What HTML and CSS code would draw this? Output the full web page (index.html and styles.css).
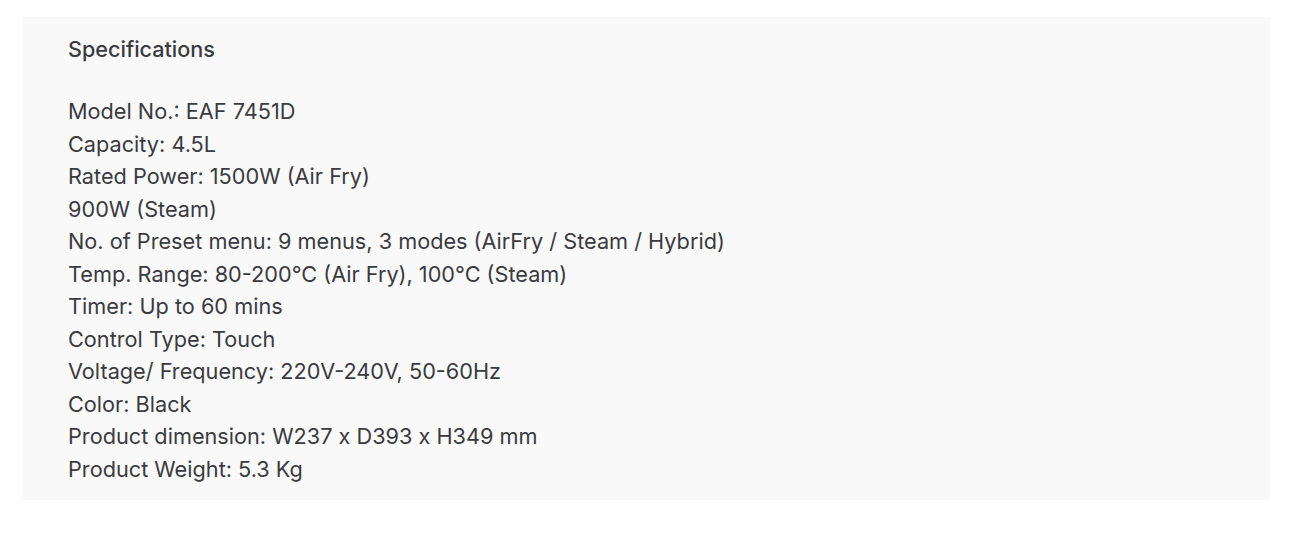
FILE: index.html
```html
<!DOCTYPE html>
<html>
<head>
<meta charset="utf-8">
<link rel="stylesheet" href="styles.css">
</head>
<body>
<section class="specs">
  <h2 class="specs-title">Specifications</h2>
  <div class="specs-list">
    <p>Model No.: EAF 7451D</p>
    <p>Capacity: 4.5L</p>
    <p>Rated Power: 1500W (Air Fry)</p>
    <p>900W (Steam)</p>
    <p>No. of Preset menu: 9 menus, 3 modes (AirFry / Steam / Hybrid)</p>
    <p>Temp. Range: 80-200°C (Air Fry), 100°C (Steam)</p>
    <p>Timer: Up to 60 mins</p>
    <p>Control Type: Touch</p>
    <p>Voltage/ Frequency: 220V-240V, 50-60Hz</p>
    <p>Color: Black</p>
    <p>Product dimension: W237 x D393 x H349 mm</p>
    <p>Product Weight: 5.3 Kg</p>
  </div>
</section>
</body>
</html>
```
FILE: styles.css
```css
html, body {
  margin: 0;
  padding: 0;
  background: #ffffff;
}
body {
  padding: 17px 22px 0 23px;
  font-family: Inter, "Noto Sans", sans-serif;
  color: #393b3f;
}
.specs {
  background: #f9f9f9;
  height: 483px;
  box-sizing: border-box;
  padding: 16px 45px 0 45px;
}
.specs-title {
  margin: 0;
  font-size: 21.6px;
  font-weight: 500;
  line-height: 32.5px;
}
.specs-list {
  margin-top: 29.5px;
}
.specs-list p {
  margin: 0;
  font-size: 21.7px;
  line-height: 32.5px;
}
```
